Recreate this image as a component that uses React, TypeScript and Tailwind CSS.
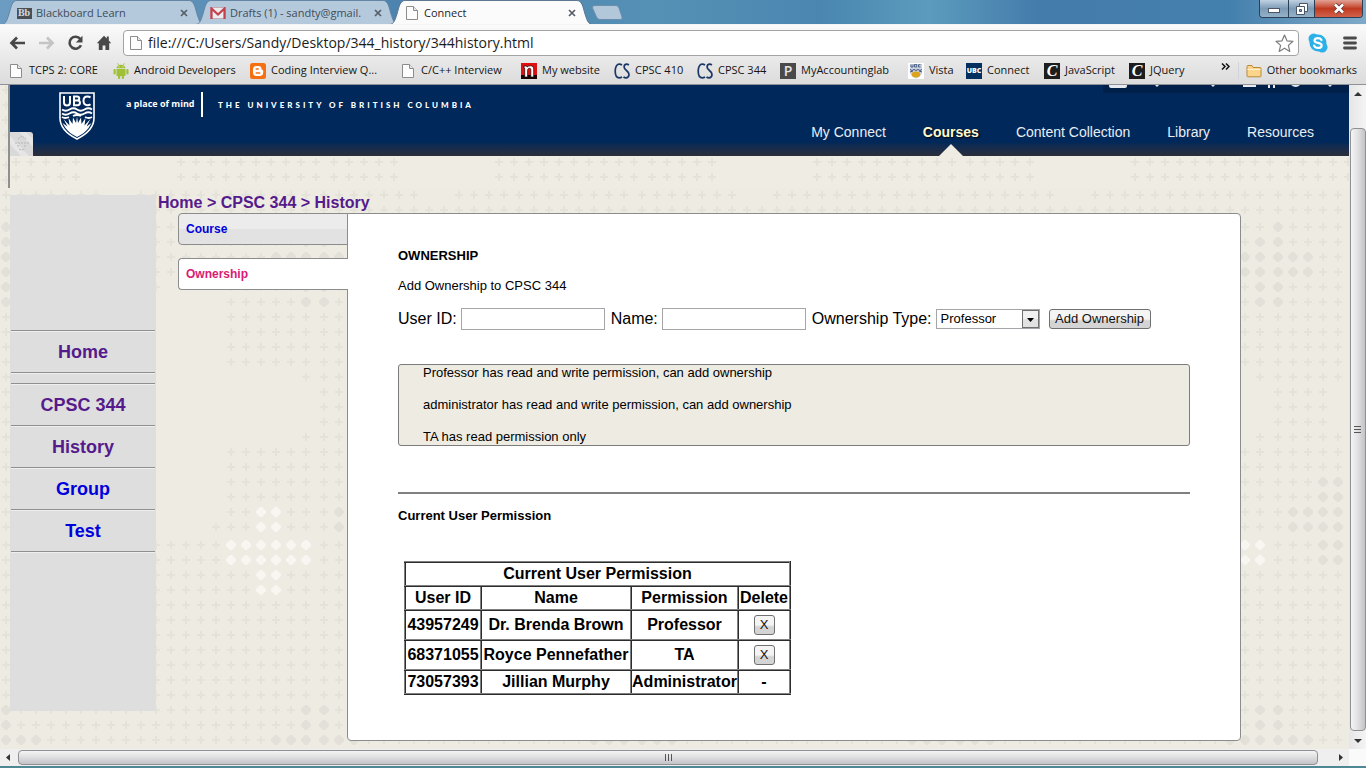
import React from 'react';

const UI = "font-['Open_Sans','Noto_Sans',sans-serif]";

/* ---------- backdrop ---------- */

const FULL = '+++++++++++++++++++++';

const DOT_ROWS: [number, string][] = [
  [5, FULL],
  [20, FULL],
  [35, FULL],
  [50, FULL],
  [65, FULL],
  [80, FULL],
  [95, FULL],
  [110, '+++++++..++++++++++++'],
  [125, FULL],
  [142, 'd++++++++++++++++++++'],
  [157, 'd+++++++++++++++++++d'],
  [172, 'ddd+++++++++++++++ddd'],
  [187, 'ddd++++++++++..++++dd'],
  [202, 'd++++++++++....+++++d'],
  [217, 'd++++..........+++++d'],
  [232, '+++++..........++++++'],
  [247, '+++++..........++++++'],
  [262, '+++++..........++++++'],
  [277, '+++++..........++++++'],
  [292, '+++++...............+'],
  [307, '++++.................'],
  [322, '++++.................'],
  [337, '++++.................'],
  [352, '+++++...............+'],
  [367, '+++++..........++++++'],
  [382, '+++++..........++++++'],
  [397, '+++dd..........++++++'],
  [412, '+++dd..........++++++'],
  [427, '+dddd..........++ww++'],
  [442, '+dddd.........+++ww++'],
  [460, '+++dd++++++++++wwwwww'],
  [475, '+++dd++++++++++wwwwww'],
  [490, '+++++++++++++++++ww++'],
  [505, '+++++++++++++++++ww++'],
  [520, FULL],
  [535, FULL],
  [550, FULL],
  [565, FULL],
  [580, FULL],
  [595, FULL],
  [610, FULL],
  [625, 'd+++++++++++++++++++d'],
  [640, 'd+++++++++++++++++++d'],
  [655, 'ddd+++++++++++++++ddd'],
];

const dotPath = (x: number, y: number, kind: string) =>
  kind === '+'
    ? `M${x - 1} ${y - 4}h2v3h3v2h-3v3h-2v-3h-3v-2h3z`
    : `M${x - 1} ${y - 5}h2l4 4v2l-4 4h-2l-4-4v-2z`;

const tilePath = (kind: string) =>
  DOT_ROWS.map(([y, row]) =>
    row
      .split('')
      .map((c, i) => (c === kind ? dotPath(6 + 15 * i, y, c) : ''))
      .join('')
  ).join('');

const stripPath = [6, 21]
  .map((y) =>
    [171, 186, 201, 216, 231, 246, 261, 276, 291, 306, 6, 21, 36, 51, 66].map((x) => dotPath(x, y, '+')).join('')
  )
  .join('');

function Backdrop() {
  return (
    <svg className="absolute inset-0 h-full w-full" aria-hidden="true">
      <defs>
        <pattern id="dots" width="318" height="664" patternUnits="userSpaceOnUse">
          <path d={tilePath('+')} fill="#e5e2da" />
          <path d={tilePath('d')} fill="#e2e0d8" />
          <path d={tilePath('w')} fill="#f7f6f1" />
        </pattern>
      </defs>
      <rect width="100%" height="100%" fill="url(#dots)" />
    </svg>
  );
}

function StripDots() {
  return (
    <svg className="absolute inset-0 h-full w-full" aria-hidden="true">
      <defs>
        <pattern id="strip" width="318" height="32" patternUnits="userSpaceOnUse">
          <path d={stripPath} fill="#e5e2da" />
        </pattern>
      </defs>
      <rect width="100%" height="100%" fill="url(#strip)" />
    </svg>
  );
}

/* ---------- browser icons ---------- */

const PageIcon = () => (
  <svg width="16" height="16" viewBox="0 0 16 16" className="shrink-0" aria-hidden="true">
    <path d="M2.5 1.5h7l4 4v9h-11z" fill="#fdfdfd" stroke="#8c8c8c" />
    <path d="M9.5 1.5v4h4" fill="#e8e8e8" stroke="#8c8c8c" />
  </svg>
);

const AndroidIcon = () => (
  <svg width="16" height="16" viewBox="0 0 16 16" className="shrink-0" aria-hidden="true" fill="#9fc037">
    <path d="M3.5 5.2C3.7 3 5.500 1.700 8 1.700s4.300 1.300 4.500 3.500z" />
    <path d="M4.500 .3l1.300 2M11.500 .3l-1.300 2" stroke="#9fc037" strokeWidth=".8" />
    <path d="M3.500 6h9v6.200a.8.8 0 0 1-.8.8H4.300a.8.8 0 0 1-.8-.8z" />
    <rect x="0.500" y="6" width="2.200" height="5.500" rx="1.100" />
    <rect x="13.300" y="6" width="2.200" height="5.500" rx="1.100" />
    <rect x="5" y="11" width="2.200" height="5" rx="1.100" />
    <rect x="8.800" y="11" width="2.200" height="5" rx="1.100" />
    <circle cx="6" cy="3.700" r=".5" fill="#fff" />
    <circle cx="10" cy="3.700" r=".5" fill="#fff" />
  </svg>
);

const BloggerIcon = () => (
  <svg width="16" height="16" viewBox="0 0 16 16" className="shrink-0" aria-hidden="true">
    <rect width="16" height="16" rx="2.500" fill="#f57010" />
    <path
      d="M6.300 3h2.400C10.400 3 11.500 4.200 11.500 5.700c0 .8.300 1 .9 1 .5 0 .8.300.8.700v2.300c0 1.900-1.300 3.300-3.200 3.300H6.300C4.400 13 3 11.600 3 9.700V6.300C3 4.400 4.400 3 6.300 3z"
      fill="#fff"
    />
    <path d="M6.200 6h2M6.200 10h3.600" stroke="#f57010" strokeWidth="1.400" strokeLinecap="round" />
  </svg>
);

const NIcon = () => (
  <svg width="16" height="16" viewBox="0 0 16 16" className="shrink-0" aria-hidden="true">
    <rect width="16" height="12" fill="#e01010" />
    <rect y="12" width="16" height="4" fill="#150404" />
    <path d="M3 3h2.500l.7 1C7 3.200 8 2.800 9.300 2.800c2.200 0 3.400 1.200 3.400 3.400V14H9.800V6.800c0-1-.4-1.500-1.300-1.500-1.200 0-1.900.7-1.900 2V14H3.700V5.200H3z" fill="#fff" stroke="#1a0000" strokeWidth=".7" />
  </svg>
);

const CsIcon = () => (
  <svg width="16" height="16" viewBox="0 0 16 16" className="shrink-0" aria-hidden="true">
    <path d="M8 2.200C7.200 1.500 6.300 1.200 5.300 1.200 2.700 1.200 1.200 4 1.200 8s1.500 6.800 4.100 6.800c1 0 1.900-.3 2.700-1" fill="none" stroke="#1a3768" strokeWidth="1.700" />
    <path d="M14.900 2c-.7-.5-1.300-.8-2.200-.8-1.600 0-2.600 1.200-2.600 2.800 0 3.500 4.900 3.600 4.900 7.500 0 2-1.200 3.300-3 3.300-1 0-1.800-.3-2.500-1" fill="none" stroke="#1a3768" strokeWidth="1.700" />
  </svg>
);

const PIcon = () => (
  <span className="flex h-4 w-4 shrink-0 items-center justify-center bg-[#4a4a4a] font-['Open_Sans',sans-serif] text-sm leading-4 font-semibold text-[#e4e4e4]">P</span>
);

const VistaIcon = () => (
  <svg width="16" height="16" viewBox="0 0 16 16" className="shrink-0" aria-hidden="true">
    <rect width="16" height="16" fill="#fff" />
    <path d="M2 1h12v8c0 3-2.500 5-6 6.500C4.500 14 2 12 2 9z" fill="#c9d3e3" />
    <path d="M3 1.500v2.500h2V1.500M6.500 4V1.500h2.200V4zM12.500 1.700h-2V4h2" fill="none" stroke="#44587c" strokeWidth=".9" />
    <path d="M2 6.500l2 1 2-1 2 1 2-1 2 1 2-1M2 9l3-1M14 9l-3-1" fill="none" stroke="#44587c" strokeWidth="1" />
    <ellipse cx="8" cy="11.500" rx="4.300" ry="3" fill="#dca41b" />
  </svg>
);

const UbcIcon = () => (
  <span className="flex h-4 w-4 shrink-0 items-center justify-center bg-[#03305f] font-['Open_Sans',sans-serif] text-[7px] leading-4 font-extrabold text-white">UBC</span>
);

const CIcon = () => (
  <span className="flex h-4 w-4 shrink-0 items-center justify-center bg-[#1d1d1d] font-['Liberation_Serif',serif] text-base leading-4 font-bold text-white italic">C</span>
);

const FolderIcon = () => (
  <svg width="16" height="16" viewBox="0 0 16 16" className="shrink-0" aria-hidden="true">
    <path d="M1 13V3.500Q1 2.500 2 2.500h4l1.200 2H14q1 0 1 1V13q0 .8-1 .8H2q-1 0-1-.8z" fill="#fbd58a" stroke="#b98a3c" />
    <path d="M1.500 6.500h13" stroke="#fdf0cf" />
  </svg>
);

const CloseX = () => (
  <svg width="8" height="8" viewBox="0 0 8 8" aria-hidden="true">
    <path d="M1 1l6 6M7 1L1 7" stroke="#555d66" strokeWidth="1.700" />
  </svg>
);

/* ---------- browser window ---------- */

function Tab({ icon, title, active }: { icon: React.ReactNode; title: string; active?: boolean }) {
  return (
    <div className={active ? 'relative z-10 -ml-2 h-6 w-[202px]' : 'relative -ml-2 h-6 w-[202px] first:ml-0'}>
      <svg className="absolute inset-0 h-full w-full" viewBox="0 0 202 24" preserveAspectRatio="none" aria-hidden="true">
        <path
          d="M0 24.500C4 24 5 20 7 14 9 7 10 .5 15 .5H187C192 .5 193 7 195 14 197 20 198 24 202 24.500z"
          fill={active ? '#fbfbfb' : '#b4c9dc'}
          stroke={active ? '#5b7791' : '#6485a3'}
        />
      </svg>
      <div className="relative flex h-6 items-center pt-0.5 pr-4 pl-[14px]">
        <span className="mr-1 flex h-4 w-4 items-center justify-center">{icon}</span>
        <span
          className={
            active
              ? 'flex-1 overflow-hidden text-[11px] whitespace-nowrap text-[#1e1e1e]'
              : 'flex-1 overflow-hidden text-[11px] whitespace-nowrap text-[#3f4d5a]'
          }
        >
          {title}
        </span>
        <button type="button" aria-label={`Close ${title}`} className="ml-1">
          <CloseX />
        </button>
      </div>
    </div>
  );
}

const BOOKMARKS = [
  { label: 'TCPS 2: CORE', icon: <PageIcon />, slot: 'w-[105px]' },
  { label: 'Android Developers', icon: <AndroidIcon />, slot: 'w-[137px]' },
  { label: 'Coding Interview Q...', icon: <BloggerIcon />, slot: 'w-[150px]' },
  { label: 'C/C++ Interview', icon: <PageIcon />, slot: 'w-[121px]' },
  { label: 'My website', icon: <NIcon />, slot: 'w-[93px]' },
  { label: 'CPSC 410', icon: <CsIcon />, slot: 'w-[83px]' },
  { label: 'CPSC 344', icon: <CsIcon />, slot: 'w-[83px]' },
  { label: 'MyAccountinglab', icon: <PIcon />, slot: 'w-[128px]' },
  { label: 'Vista', icon: <VistaIcon />, slot: 'w-[58px]' },
  { label: 'Connect', icon: <UbcIcon />, slot: 'w-[78px]' },
  { label: 'JavaScript', icon: <CIcon />, slot: 'w-[85px]' },
  { label: 'JQuery', icon: <CIcon />, slot: 'w-[62px]' },
];

function BrowserChrome() {
  return (
    <header className={`${UI} shrink-0`}>
      <div className="relative flex h-6 items-end bg-[linear-gradient(90deg,#6d9cc2_0%,#4b83ae_30%,#5590b5_48%,#4a86b0_60%,#5c9bbd_68%,#447cab_76%,#4480ad_90%,#7fa9c8_100%)] pl-0.5">
        <Tab
          icon={<span className="flex h-[11px] w-[15px] items-center justify-center bg-[#4a4f53] font-['Liberation_Serif',serif] text-[10px] leading-3 font-bold text-[#d5dbe0]">Bb</span>}
          title="Blackboard Learn"
        />
        <Tab
          icon={
            <svg width="16" height="12" viewBox="0 0 16 12" aria-hidden="true">
              <rect x=".5" y=".5" width="15" height="11" fill="#ecebee" stroke="#c9a9b3" />
              <path d="M1.500 12V1.500L8 7.500l6.500-6V12" fill="none" stroke="#c4414c" strokeWidth="2.200" />
            </svg>
          }
          title="Drafts (1) - sandty@gmail."
        />
        <Tab active icon={<PageIcon />} title="Connect" />
        <button type="button" aria-label="New tab" className="mb-1 -ml-px">
          <svg width="32" height="15" viewBox="0 0 32 15" className="block" aria-hidden="true">
            <path d="M4 .5h21q2 0 3 2.500l3 9q.7 2.500-1.500 2.500H9q-2.500 0-3.500-2.500l-4-9Q.8.5 4 .5z" fill="#b2c8da" stroke="#6a8eae" />
          </svg>
        </button>
        <div className="mr-[3px] ml-auto flex h-[18px] self-start overflow-hidden rounded-b border border-t-0 border-[#2b3f55]">
          <button type="button" aria-label="Minimize" className="flex w-7 items-center justify-center bg-gradient-to-b from-[#c0d2e2] via-[#7d9bb6] to-[#94b1c9]">
            <svg width="12" height="5" viewBox="0 0 12 5" className="mt-1" aria-hidden="true"><rect x=".5" y=".5" width="11" height="4" fill="#fff" stroke="#4b5766" /></svg>
          </button>
          <button type="button" aria-label="Restore" className="flex w-[26px] items-center justify-center border-l border-[#2b3f55] bg-gradient-to-b from-[#c0d2e2] via-[#7d9bb6] to-[#94b1c9]">
            <svg width="12" height="12" viewBox="0 0 12 12" aria-hidden="true">
              <path d="M3.500.5h8v8h-8z" fill="#fff" stroke="#4b5766" />
              <path d="M.5 3.500h8v8h-8z" fill="#fff" stroke="#4b5766" />
              <path d="M3.500 6.500h2v2h-2z" fill="#8ba6bf" stroke="#4b5766" />
            </svg>
          </button>
          <button type="button" aria-label="Close" className="flex w-12 items-center justify-center border-l border-[#2b3f55] bg-gradient-to-b from-[#e2a195] via-[#c03a20] to-[#d1604a]">
            <svg width="12" height="11" viewBox="0 0 12 11" aria-hidden="true">
              <path d="M2 1.500l8 8M10 1.500l-8 8" stroke="#5b3a3a" strokeWidth="4.200" />
              <path d="M2 1.500l8 8M10 1.500l-8 8" stroke="#fff" strokeWidth="2.600" />
            </svg>
          </button>
        </div>
      </div>

      <div className="border-t border-b border-t-[#f4f4f4] border-b-[#8e9297] bg-gradient-to-b from-[#fafafa] to-[#dcdcdc]">
        <div className="flex h-[34px] items-center pt-0.5">
          <button type="button" aria-label="Back" className="ml-[9px]">
            <svg width="17" height="16" viewBox="0 0 17 16" aria-hidden="true"><path d="M8 2.500L2.500 8 8 13.500M3 8h13" fill="none" stroke="#484848" strokeWidth="2.700" /></svg>
          </button>
          <button type="button" aria-label="Forward" className="ml-3">
            <svg width="17" height="16" viewBox="0 0 17 16" aria-hidden="true"><path d="M9 2.500L14.500 8 9 13.500M14 8H1" fill="none" stroke="#c4c4c4" strokeWidth="2.700" /></svg>
          </button>
          <button type="button" aria-label="Reload" className="ml-3">
            <svg width="17" height="16" viewBox="0 0 17 16" aria-hidden="true">
              <path d="M13.300 4A6 6 0 1 0 14 10.300" fill="none" stroke="#484848" strokeWidth="2.600" />
              <path d="M15.500 .8v6.700H8.800z" fill="#484848" />
            </svg>
          </button>
          <button type="button" aria-label="Home page" className="ml-3">
            <svg width="16" height="16" viewBox="0 0 16 16" aria-hidden="true">
              <path d="M8 .8L.8 8.300h2V15h3.800v-4.500h2.800V15h3.800V8.300h2L12.800 5.500V1.500h-2v2z" fill="#484848" />
            </svg>
          </button>
          <div className="ml-[11px] flex h-[26px] flex-1 items-center rounded-sm border border-[#a3a3a3] bg-white pr-1 pl-1">
            <PageIcon />
            <input
              aria-label="Address"
              className="ml-1 h-6 min-w-0 flex-1 bg-transparent pb-0.5 text-sm text-[#1c1c1c] outline-none"
              defaultValue="file:///C:/Users/Sandy/Desktop/344_history/344history.html"
            />
            <button type="button" aria-label="Bookmark this page">
              <svg width="19" height="18" viewBox="0 0 19 18" aria-hidden="true"><path d="M9.500 1l2.500 5.800 6 .5-4.600 4.100 1.400 6-5.300-3.200-5.300 3.200 1.400-6L1 7.300l6-.5z" fill="#fff" stroke="#7d7d7d" strokeWidth="1.200" strokeLinejoin="round" /></svg>
            </button>
          </div>
          <button type="button" aria-label="Skype" className="ml-[9px]">
            <svg width="20" height="20" viewBox="0 0 20 20" aria-hidden="true">
              <circle cx="10" cy="10" r="8.500" fill="#2bb0e8" />
              <circle cx="5.800" cy="5.800" r="5.300" fill="#2bb0e8" />
              <circle cx="14.200" cy="14.200" r="5.300" fill="#2bb0e8" />
              <path d="M13.500 7c-.7-1.300-2-1.900-3.600-1.900-2 0-3.400.9-3.400 2.400 0 3.300 7.200 1.500 7.200 4.900 0 1.600-1.600 2.500-3.700 2.500-1.800 0-3.300-.8-3.900-2.300" fill="none" stroke="#fff" strokeWidth="2.200" strokeLinecap="round" />
            </svg>
          </button>
          <button type="button" aria-label="Menu" className="mr-[9px] ml-[15px]">
            <svg width="14" height="14" viewBox="0 0 14 14" aria-hidden="true"><path d="M1.500 2h11M1.500 7h11M1.500 12h11" stroke="#4a4a4a" strokeWidth="2.800" strokeLinecap="round" /></svg>
          </button>
        </div>

        <nav aria-label="Bookmarks" className="flex h-[25px] items-center pb-0.5 pl-2 text-[11px] text-[#151515]">
          {BOOKMARKS.map((b) => (
            <a key={b.label} href="#" className={`${b.slot} flex shrink-0 items-center gap-[5px] whitespace-nowrap`}>
              {b.icon}
              {b.label}
            </a>
          ))}
          <button type="button" aria-label="More bookmarks" className="mr-2 mb-2 ml-auto">
            <svg width="9" height="7" viewBox="0 0 9 7" aria-hidden="true"><path d="M1 .5l3 3-3 3M5 .5l3 3-3 3" fill="none" stroke="#111" strokeWidth="1.500" /></svg>
          </button>
          <a href="#" className="flex items-center gap-[5px] border-l border-[#cfd3da] pr-[9px] pl-[7px] whitespace-nowrap">
            <FolderIcon />
            <span>Other bookmarks</span>
          </a>
        </nav>
      </div>
    </header>
  );
}

/* ---------- site header ---------- */

function Crest() {
  return (
    <svg width="36" height="48" viewBox="0 0 36 48" aria-hidden="true">
      <path d="M1 1h34v25c0 10-7 16-17 21C8 42 1 36 1 26z" fill="#02285a" stroke="#fff" strokeWidth="1.600" />
      <g fill="none" stroke="#fff" strokeWidth="2">
        <path d="M5 4v6.500c0 2 1 3 3 3s3-1 3-3V4" />
        <path d="M15 4.500h3c3 0 3 4 0 4h-3zM15 8.500h3.500c3.300 0 3.300 4.700 0 4.700H15z" />
        <path d="M31.500 5.500c-1-.8-2-1-3-1-2.600 0-4 1.800-4 4.300s1.500 4.400 4 4.400c1 0 2-.2 3-1" />
      </g>
      <g fill="none" stroke="#fff" strokeWidth="1.800">
        <path d="M3 17.500q3.500 2.500 7.500 0t7.500 0 7.500 0 7.500 0" />
        <path d="M3 21.500q3.500 2.500 7.500 0t7.500 0 7.500 0 7.500 0" />
        <path d="M3 25q3 2 7 0M33 25q-3 2-7 0M14 24q4-2 8 0" />
      </g>
      <path
        d="M18 45c-5-2.500-9-5.500-11.500-9L3.500 31l5 3.500-4-7.500 6 6.500L9.500 26l4 6 .5-6.500 3 5.500 1-6.500 1 6.500 3-5.500.5 6.500 4-6-1 7.500 6-6.500-4 7.500 5-3.500-3 5C27 39.500 23 42.500 18 45z"
        fill="#fff"
      />
    </svg>
  );
}

function SiteHeader() {
  return (
    <div className="ml-2 border-l-2 border-[#8f8f8f]">
      <div className="relative flex h-[71px] bg-gradient-to-b from-[#00285a] from-80% to-[#2a2e3a] pl-[49px] text-white">
        <div className="pt-[7px]">
          <Crest />
        </div>
        <div className={`${UI} ml-[31px] flex h-[38px] items-center`}>
          <span className="w-[66px] text-[9px] font-bold whitespace-nowrap">a place of mind</span>
          <span className="mr-[15px] ml-[9px] h-[25px] w-0.5 bg-white" />
          <span className="mt-0.5 font-['Lato',sans-serif] text-[8px] font-black tracking-[3px] whitespace-nowrap">THE UNIVERSITY OF BRITISH COLUMBIA</span>
        </div>
        <nav aria-label="Site" className="ml-auto flex items-start gap-[37px] pt-[37px] pr-[35px] text-sm leading-5 text-[#e9eef5]">
          <a href="#">My Connect</a>
          <a href="#" className="relative h-[34px] font-bold text-[#fff8cf] [text-shadow:1px_1px_2px_#000]">
            Courses
            <svg width="24" height="12" viewBox="0 0 24 12" className="absolute bottom-0 left-1/2 -ml-3" aria-hidden="true">
              <path d="M0 12L12 0l12 12z" fill="#efece4" />
            </svg>
          </a>
          <a href="#">Content Collection</a>
          <a href="#">Library</a>
          <a href="#">Resources</a>
        </nav>
        <svg width="246" height="8" viewBox="0 0 246 8" className="absolute top-0 right-0" aria-hidden="true">
          <rect width="246" height="8" fill="#001f49" />
          <g fill="#e6e9ee">
            <path d="M6 0h18v1q0 2-2 2H8Q6 3 6 1z" />
            <path d="M52 0h4l-2 2zM108 0h4l-2 2z" />
            <rect x="140" width="13" height="2" />
            <rect x="165" width="2" height="3" />
            <rect x="170" width="2" height="3" />
            <path d="M188 0h9q-4 4-9 0zM225 0h4l-2 2z" />
          </g>
        </svg>
        <svg width="23" height="24" viewBox="0 0 23 24" className="absolute bottom-0 left-0" aria-hidden="true">
          <path d="M0 0h20q3 0 3 3v21H0z" fill="#d9d9da" />
          <path d="M0 4l19 20h-8L0 12zM9 0l14 15V7L16 0z" fill="#e6e6e6" />
          <path d="M8 7l4-3 4 3M5 11h14M7 14h3m4 0h3M9 17l3 1 3-1" fill="none" stroke="#b5b5b5" strokeDasharray="2 1" />
        </svg>
      </div>
      <div className="relative h-8 bg-[#efece4]">
        <StripDots />
      </div>
    </div>
  );
}

/* ---------- page ---------- */

const VISITED = 'text-[#551a8b]';
const LINK = 'text-[#0000dd]';

const Rule = () => <hr className="h-0.5 border-0 border-t border-b border-t-[#8f8f8f] border-b-[#efefef]" />;

function SideMenu() {
  const items = [
    { label: 'CPSC 344', tone: VISITED },
    { label: 'History', tone: VISITED },
    { label: 'Group', tone: LINK },
    { label: 'Test', tone: LINK },
  ];
  return (
    <aside className="mt-[7px] ml-[10px] h-[516px] w-[146px] shrink-0 bg-[#dedede] px-px pt-[135px] text-center text-lg leading-10 font-bold">
      <Rule />
      <a href="#" className={`${VISITED} block`}>Home</a>
      <Rule />
      <div className="h-[9px]" />
      <Rule />
      {items.map((i) => (
        <React.Fragment key={i.label}>
          <a href="#" className={`${i.tone} block`}>{i.label}</a>
          <Rule />
        </React.Fragment>
      ))}
    </aside>
  );
}

const USERS = [
  { id: '43957249', name: 'Dr. Brenda Brown', permission: 'Professor', removable: true },
  { id: '68371055', name: 'Royce Pennefather', permission: 'TA', removable: true },
  { id: '73057393', name: 'Jillian Murphy', permission: 'Administrator', removable: false },
];

const CELL = 'border-2 border-[#808080] [border-style:ridge] p-0 font-bold';
const PUSH = 'rounded-[3px] border border-[#707070] bg-gradient-to-b from-[#f4f4f4] from-50% to-[#d4d4d4] to-60% text-[13px] text-[#111]';

function PermissionTable() {
  return (
    <table className="mt-[35px] ml-1.5 border-collapse text-center text-base leading-5">
      <thead>
        <tr className="h-6">
          <th colSpan={4} className={CELL}>Current User Permission</th>
        </tr>
        <tr className="h-6">
          <th className={`${CELL} w-[76px]`}>User ID</th>
          <th className={`${CELL} w-[150px]`}>Name</th>
          <th className={`${CELL} w-[107px]`}>Permission</th>
          <th className={`${CELL} w-[52px]`}>Delete</th>
        </tr>
      </thead>
      <tbody>
        {USERS.map((u) => (
          <tr key={u.id} className={u.removable ? 'h-[30px]' : 'h-6'}>
            <td className={CELL}>{u.id}</td>
            <td className={CELL}>{u.name}</td>
            <td className={CELL}>{u.permission}</td>
            <td className={CELL}>
              {u.removable ? (
                <button type="button" aria-label={`Delete ${u.name}`} className={`${PUSH} mx-auto block h-5 w-[21px] leading-[18px] font-normal`}>X</button>
              ) : (
                '-'
              )}
            </td>
          </tr>
        ))}
      </tbody>
    </table>
  );
}

function OwnershipCard() {
  const field = 'h-[22px] w-36 border border-[#a5a5a9] bg-white px-1 text-[13px] outline-none';
  return (
    <section className="mr-[108px] flex-1 rounded-r rounded-bl border border-[#8c8c8c] bg-white px-[50px] pt-8 pb-[45px] text-black">
      <h1 className="text-[13px] leading-5 font-bold">OWNERSHIP</h1>
      <p className="mt-2.5 text-[13px] leading-5">Add Ownership to CPSC 344</p>
      <form className="mt-3 flex items-center gap-1.5 leading-5 whitespace-nowrap" onSubmit={(e) => e.preventDefault()}>
        <span className="flex items-center gap-1">
          <label htmlFor="uid">User ID:</label>
          <input id="uid" className={field} />
        </span>
        <span className="flex items-center gap-1">
          <label htmlFor="uname">Name:</label>
          <input id="uname" className={field} />
        </span>
        <span className="flex items-center gap-1">
          <label htmlFor="utype">Ownership Type:</label>
          <span className="relative flex">
            <select id="utype" defaultValue="Professor" className="h-5 w-[104px] appearance-none border border-[#a5a5a9] bg-white pl-1 text-[13px] leading-[18px] outline-none">
              <option>Professor</option>
              <option>Administrator</option>
              <option>TA</option>
            </select>
            <svg width="17" height="18" viewBox="0 0 17 18" className="pointer-events-none absolute top-px right-px" aria-hidden="true">
              <rect x=".5" y=".5" width="16" height="17" fill="#e2e2e2" stroke="#707070" />
              <rect x="1" y="1" width="15" height="8" fill="#f1f1f1" />
              <path d="M5 8h7l-3.500 4z" fill="#000" />
            </svg>
          </span>
        </span>
        <button type="submit" className={`${PUSH} ml-[3px] h-5 w-[102px] leading-[18px]`}>Add Ownership</button>
      </form>
      <div className="mt-[34px] flex flex-col gap-4 rounded-[3px] border border-[#7c7c7c] bg-[#eeebe3] pl-6 text-[13px] leading-4">
        <p>Professor has read and write permission, can add ownership</p>
        <p>administrator has read and write permission, can add ownership</p>
        <p>TA has read permission only</p>
      </div>
      <hr className="mt-[46px] h-0.5 border-0 bg-[#808080]" />
      <h2 className="mt-3 text-[13px] leading-5 font-bold">Current User Permission</h2>
      <PermissionTable />
    </section>
  );
}

export default function App() {
  return (
    <div className="flex min-h-screen flex-col overflow-hidden bg-[#eeebe3] font-['Liberation_Sans',Arial,sans-serif]">
      <BrowserChrome />
      <div className="flex flex-1">
        <div className="relative flex-1 bg-[#eeebe3]">
          <Backdrop />
          <div className="relative">
            <SiteHeader />
            <div className="flex items-start">
              <SideMenu />
              <main className="flex-1 pt-[5px] pb-2 pl-0.5">
                <nav aria-label="Breadcrumb" className={`${VISITED} h-5 leading-[19px] font-bold`}>
                  <a href="#">Home</a> &gt; <a href="#">CPSC 344</a> &gt; <a href="#">History</a>
                </nav>
                <div className="flex items-start pl-5">
                  <nav aria-label="Sections" className="relative z-10 -mr-px flex w-[170px] shrink-0 flex-col gap-[13px] text-xs leading-[30px] font-bold">
                    <a href="#" className={`${LINK} rounded-l border border-[#8c8c8c] bg-gradient-to-b from-[#ececec] from-50% to-[#e2e2e2] to-50% pl-[7px]`}>Course</a>
                    <a href="#" className="rounded-l border border-r-0 border-[#8c8c8c] bg-white pl-[7px] text-[#d81b74]">Ownership</a>
                  </nav>
                  <OwnershipCard />
                </div>
              </main>
            </div>
          </div>
        </div>
        <div className="flex w-[17px] shrink-0 flex-col items-center bg-gradient-to-r from-[#e6e6e6] to-[#f4f4f4]" aria-hidden="true">
          <svg width="17" height="43" viewBox="0 0 17 43"><path d="M5 11h8L9 7z" fill="#333" /></svg>
          <div className="flex w-4 flex-1 items-center justify-center rounded-sm border border-[#8f9095] bg-gradient-to-r from-[#f5f5f5] via-[#e0e0e2] to-[#c3c3c8]">
            <svg width="8" height="9" viewBox="0 0 8 9"><path d="M0 1.500h7M0 4.500h7M0 7.500h7" stroke="#555" /></svg>
          </div>
          <svg width="17" height="18" viewBox="0 0 17 18"><path d="M5 8h8l-4 4z" fill="#333" /></svg>
        </div>
      </div>
      <div className="flex h-[17px] shrink-0 items-center bg-[#efefef]" aria-hidden="true">
        <svg width="18" height="17" viewBox="0 0 18 17"><path d="M10 5v7L6 8.500z" fill="#333" /></svg>
        <div className="flex h-[15px] flex-1 items-center justify-center rounded-sm border border-[#8f9095] bg-gradient-to-b from-[#f5f5f5] via-[#dedee0] to-[#c3c3c8]">
          <svg width="9" height="7" viewBox="0 0 9 7"><path d="M1.500 0v7M4.500 0v7M7.500 0v7" stroke="#555" /></svg>
        </div>
        <svg width="31" height="17" viewBox="0 0 31 17"><path d="M21 5v7l4-3.500z" fill="#333" /></svg>
        <div className="h-full w-[17px] bg-[#fafafa]" />
      </div>
      <div className="h-0.5 shrink-0 bg-[#4f8794]" />
    </div>
  );
}
